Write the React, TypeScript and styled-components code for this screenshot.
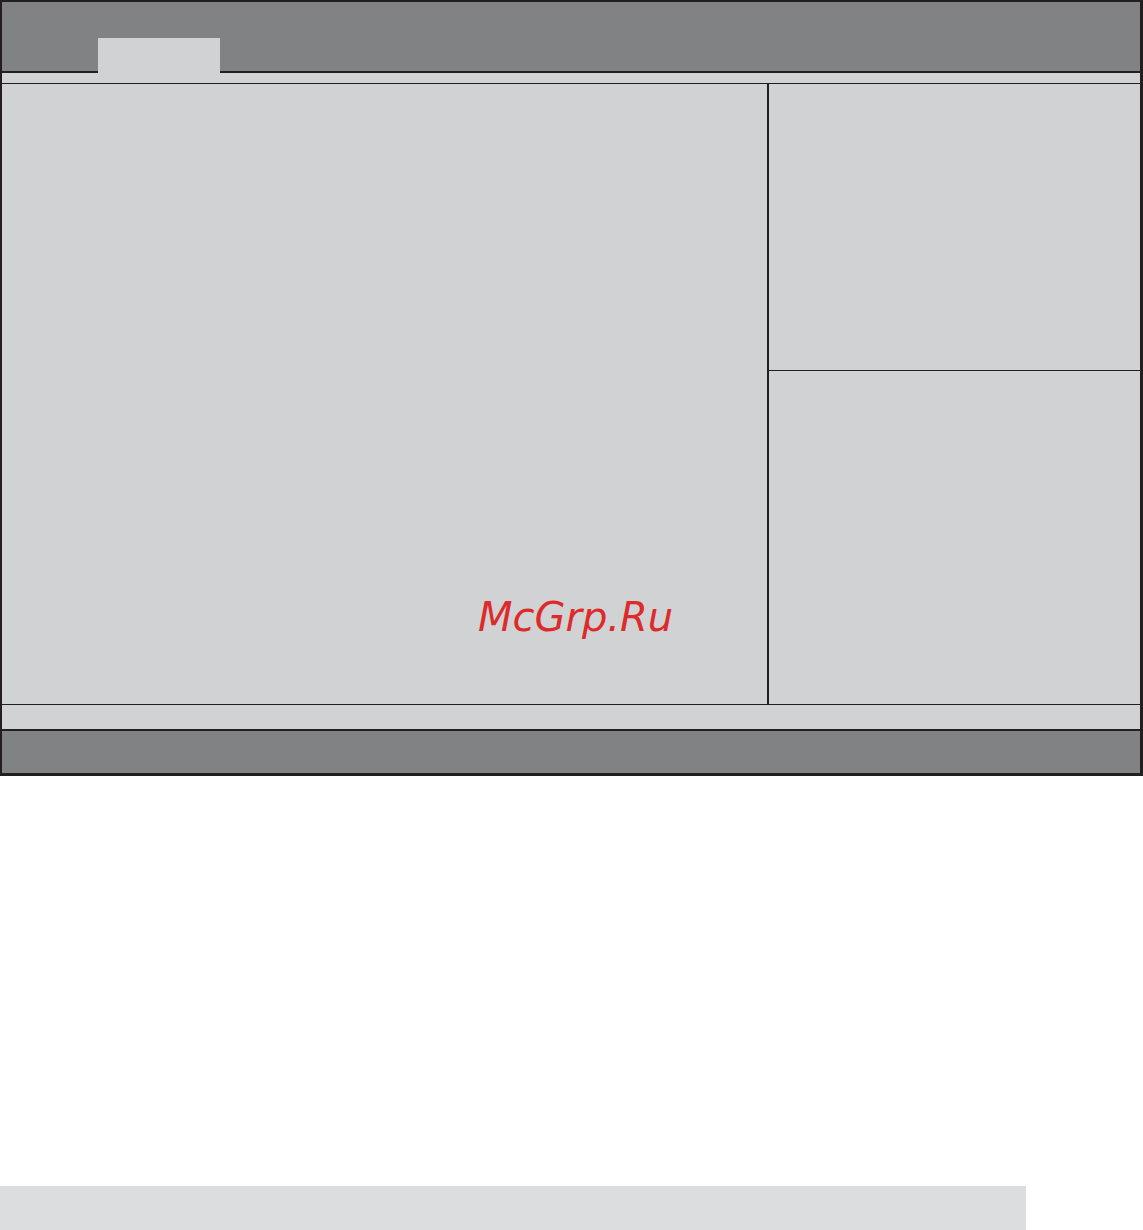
import styled, { createGlobalStyle } from "styled-components"

const dark = "#231f20"
const gray = "#818284"
const light = "#d1d2d4"

const Global = createGlobalStyle`
    body {
        margin: 0;
        background: #ffffff;
        font-family: "DejaVu Sans", sans-serif;
    }
`

const Page = styled.div`
    width: 1143px;
    height: 1230px;
    display: flex;
    flex-direction: column;
    justify-content: space-between;
`

const Frame = styled.div`
    width: 1143px;
    box-sizing: border-box;
    border-style: solid;
    border-color: ${dark};
    border-width: 2px 3px 3px 2px;
    display: flex;
    flex-direction: column;
    background: ${light};
`

const Header = styled.div`
    height: 69px;
    background: ${gray};
    border-bottom: 2px solid ${dark};
    display: flex;
    align-items: flex-end;
    padding-left: 96px;
`

const Tab = styled.div`
    width: 122px;
    height: 35px;
    margin-bottom: -2px;
    background: ${light};
    position: relative;
    z-index: 1;
`

const Strip = styled.div<{ $h: number; $line: number }>`
    height: ${(p) => p.$h}px;
    background: ${light};
    border-bottom: ${(p) => p.$line}px solid ${dark};
`

const Main = styled.div`
    height: 620px;
    display: flex;
    border-bottom: 1px solid ${dark};
`

const LeftPanel = styled.div`
    width: 765px;
    position: relative;
    border-right: 2px solid ${dark};
`

const RightPanel = styled.div`
    flex: 1;
    display: flex;
    flex-direction: column;
`

const HelpBox = styled.div`
    height: 286px;
    border-bottom: 1px solid ${dark};
`

const KeysBox = styled.div`
    flex: 1;
`

const Watermark = styled.div`
    position: absolute;
    left: 476px;
    top: 513px;
    font-family: "DejaVu Sans", sans-serif;
    font-style: oblique;
    font-size: 40px;
    line-height: 40px;
    color: #dd2a2b;
    white-space: nowrap;
`

const Footer = styled.div`
    height: 42px;
    background: ${gray};
`

const Caption = styled.div`
    width: 1026px;
    height: 44px;
    background: #dcdddf;
`

export default function App() {
    return (
        <>
            <Global />
            <Page>
                <Frame>
                    <Header>
                        <Tab />
                    </Header>
                    <Strip $h={10} $line={1} />
                    <Main>
                        <LeftPanel>
                            <Watermark>McGrp.Ru</Watermark>
                        </LeftPanel>
                        <RightPanel>
                            <HelpBox />
                            <KeysBox />
                        </RightPanel>
                    </Main>
                    <Strip $h={24} $line={2} />
                    <Footer />
                </Frame>
                <Caption />
            </Page>
        </>
    )
}
